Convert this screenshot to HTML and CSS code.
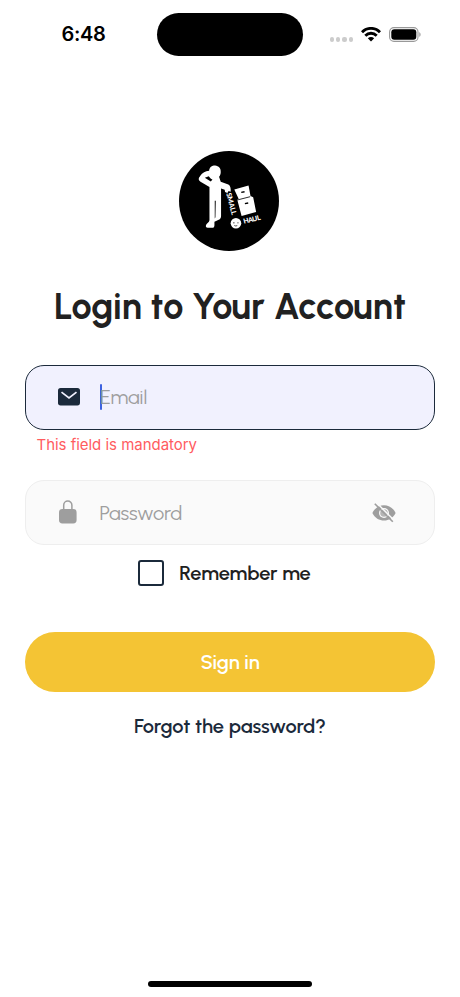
FILE: index.html
```html
<!DOCTYPE html>
<html lang="en">
<head>
<meta charset="utf-8">
<meta name="viewport" content="width=device-width, initial-scale=1">
<title>Login</title>
<link rel="stylesheet" href="styles.css">
</head>
<body>
<div class="screen">
  <header class="status">
    <span class="time">6:48</span>
    <div class="island"></div>
    <div class="indicators">
      <div class="dots"><i></i><i></i><i></i><i></i></div>
      <svg class="wifi" viewBox="0 0 20 15" width="20" height="15">
        <g fill="none" stroke="#000" stroke-width="2.9">
          <path d="M1 5.2C6 .1 14 .1 19 5.2"/>
          <path d="M4.3 8.7C7.6 5.500 12.400 5.500 15.7 8.700"/>
        </g>
        <path d="M6.8 11.2c1.900-1.700 4.500-1.700 6.400 0L10 14.400z"/>
      </svg>
      <svg class="battery" viewBox="0 0 32 15" width="32" height="15">
        <rect x=".6" y=".6" width="28.400" height="13.800" rx="4.400" fill="#fff" stroke="#999" stroke-width="1.100"/>
        <rect x="2.300" y="2.300" width="25" height="10.400" rx="3"/>
        <path d="M30.300 5.200c1.700.7 1.700 3.900 0 4.600z" fill="#999"/>
      </svg>
    </div>
  </header>

  <main class="login">
    <svg class="logo" viewBox="25 18 302 302" width="100" height="100" role="img" aria-label="Small Haul">
      <circle cx="176" cy="169" r="151"/>
      <g fill="#fff">
        <path d="M116 78C117 67 124 62 134 62C145 63 152 71 151 82C151 88 149 92 146 96L151 111L174 119C180 122 182 130 181 141L175 139L171 145L164 142L163 135L152 131V214C152 220 150 223 145 226L132 232V242C132 247 130 250 125 250H112C106 250 105 246 107 241C109 235 116 234 117 227V127L90 111C83 107 83 99 88 95C97 83 104 79 116 78Z"/>
        <path d="M192 134l43-12 6 32 8 4 9 44-44 12-13-49 4-3z"/>
        <circle cx="197" cy="236" r="16"/>
      </g>
      <path d="M103 99l12-5c3 5 6 8 11 10l-5 6zM133 168l3 0-1 50-2 4z"/>
      <path d="M201 166l39-10" fill="none" stroke="#000" stroke-width="2.500"/>
      <path d="M213 143l10-2M224 177l10-2" fill="none" stroke="#000" stroke-width="4"/>
      <path d="M188 235h5M201 235h4M192 243q5 3 9 0" fill="none" stroke="#000" stroke-width="2"/>
      <text class="logo-text" transform="translate(168 146) rotate(76)" textLength="68">SMALL</text>
      <text class="logo-text" transform="translate(221 238) rotate(-14)" textLength="53">HAUL</text>
    </svg>

    <h1 class="title">Login to Your Account</h1>

    <form class="form">
      <div class="field field-active">
        <svg class="mail" viewBox="0 0 22 18" width="22" height="18">
          <rect width="22" height="17.400" rx="2.600" fill="#1b2a3b"/>
          <path d="M3.500 4.200L11 10l7.500-5.800" fill="none" stroke="#f1f1fe" stroke-width="1.700"/>
        </svg>
        <span class="caret"></span>
        <span class="placeholder email">Email</span>
      </div>
      <p class="error">This field is mandatory</p>
      <div class="field">
        <svg class="lock" viewBox="0 0 18 24" width="18" height="24">
          <rect y="9" width="17.600" height="14.500" rx="3.400" fill="#9e9e9e"/>
          <path d="M4.700 10V5.200a4.100 4.100 0 0 1 8.200 0V10" fill="none" stroke="#9e9e9e" stroke-width="1.500"/>
        </svg>
        <span class="placeholder password">Password</span>
        <svg class="eye" viewBox="0 0 24 20" width="24" height="20">
          <path d="M.4 10C5-.3 19-.3 23.600 10 19 20 5 20 .4 10z" fill="#9e9e9e"/>
          <circle cx="12" cy="10" r="5" fill="#fafafa"/>
          <circle cx="12" cy="10" r="3.800" fill="#b5b5b5"/>
          <path d="M4.600-.2l18 18" stroke="#fafafa" stroke-width="1.400"/>
          <path d="M2.800.8l18 18" stroke="#9e9e9e" stroke-width="1.600"/>
        </svg>
      </div>
      <label class="remember"><span class="box"></span><span class="remember-text">Remember me</span></label>
      <button class="submit" type="button">Sign in</button>
      <a class="forgot">Forgot the password?</a>
    </form>
  </main>
  <div class="home-bar"></div>
</div>
</body>
</html>
```
FILE: styles.css
```css
* { box-sizing: border-box; }
body { margin: 0; background: #fff; font-family: Urbanist, Lato, sans-serif; color: #212121; }
.screen { width: 460px; height: 997px; display: flex; flex-direction: column; overflow: hidden; }
.status { height: 70px; display: grid; grid-template-columns: 157px 146px 157px; align-items: start; }
.time { margin: 22px 0 0 61.5px; font: 600 20px/25px Inter, sans-serif; letter-spacing: -.3px; color: #000; }
.island { margin-top: 13px; height: 43px; border-radius: 22px; background: #000; }
.indicators { display: flex; align-items: center; margin: 27px 0 0 27px; }
.dots { display: flex; gap: 2px; margin-top: 10px; }
.dots i { width: 4.200px; height: 4.200px; border-radius: 50%; background: #ccc; }
.wifi { margin-left: 8.200px; }
.battery { margin-left: 8px; }
.login { flex: 1; padding: 81px 25px 0; display: flex; flex-direction: column; align-items: center; }
.logo { flex: none; margin-right: 2px; }
.logo-text { font: 900 21px Lato, sans-serif; fill: #fff; }
.title { margin: 32px 0 0; font-size: 36px; line-height: 48px; font-weight: 700; white-space: nowrap; letter-spacing: .07px; }
.form { width: 410px; margin-top: 34px; display: flex; flex-direction: column; align-items: center; }
.field { width: 100%; height: 65px; border: 1px solid #eee; border-radius: 19px; background: #fafafa; display: flex; align-items: center; padding: 0 38px 0 33px; }
.field-active { background: #f1f1fe; border-color: #1b2a3b; padding-bottom: 1px; }
.mail { margin-left: -1px; }
.caret { width: 2px; height: 26px; margin-left: 20px; background: #3d62e0; border-radius: 1px; }
.placeholder { font-size: 20px; line-height: 26px; font-weight: 400; letter-spacing: -.1px; color: #9e9e9e; }
.email { margin-left: -2px; }
.lock { margin-top: -1px; }
.password { margin-left: 22.500px; }
.eye { margin-left: auto; }
.error { margin: 5px 0 0 11.500px; align-self: flex-start; height: 20px; font: 400 15px/20px Inter, sans-serif; letter-spacing: -.03px; color: #ff5c5f; }
.error + .field { margin-top: 25px; }
.remember { display: flex; align-items: center; gap: 15.500px; height: 26px; margin-top: 15px; margin-right: 11.500px; }
.box { width: 26px; height: 26px; border: 2px solid #1b2a3b; border-radius: 3px; }
.remember-text { font-size: 20px; font-weight: 600; line-height: 26px; letter-spacing: -.12px; }
.submit { width: 410px; height: 60px; margin-top: 46px; border: 0; border-radius: 30px; background: #f4c434; color: #fff; font: 600 20px/26px Urbanist, Lato, sans-serif; letter-spacing: -.1px; }
.forgot { margin-top: 21px; font-size: 20px; line-height: 26px; font-weight: 600; letter-spacing: -.05px; color: #1b2a3b; }
.home-bar { flex: none; width: 164px; height: 6px; border-radius: 3px; background: #000; margin: 0 auto 10px; }
```
